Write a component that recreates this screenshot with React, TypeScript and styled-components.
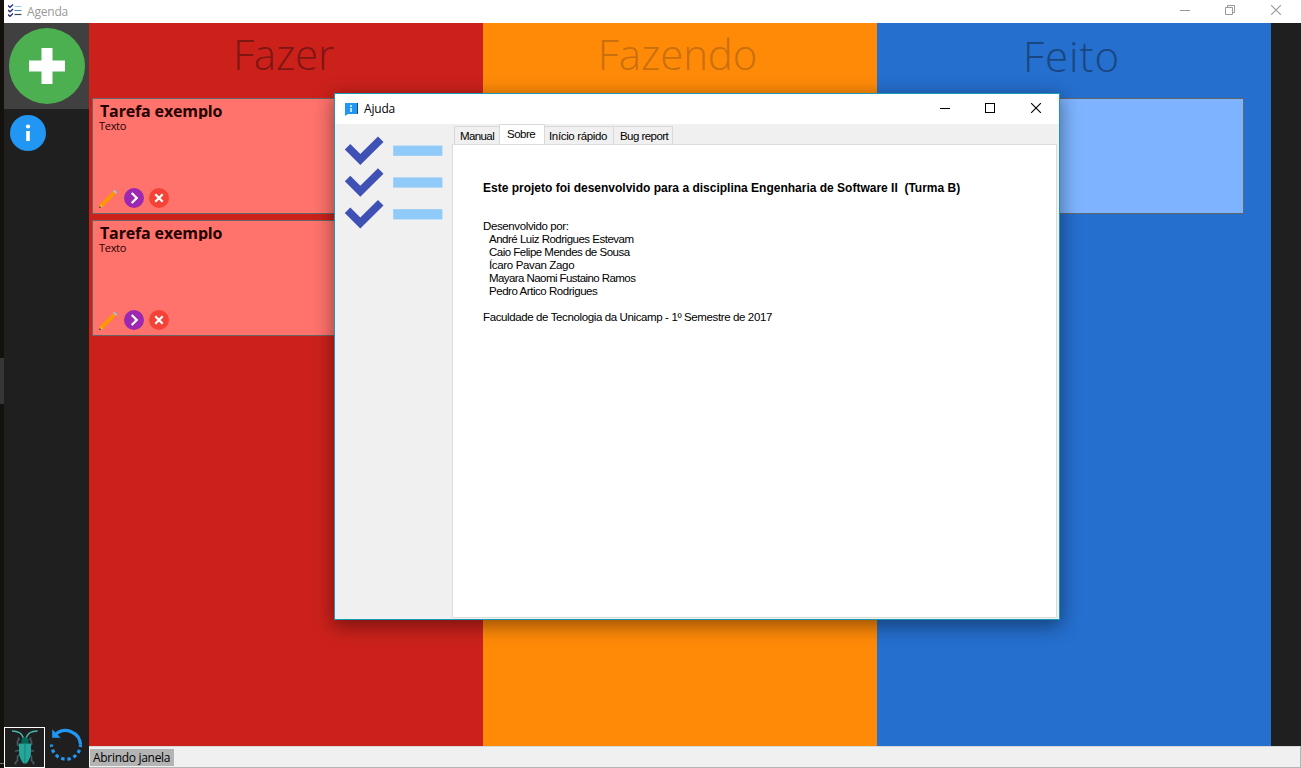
import React from "react";
import styled, { createGlobalStyle } from "styled-components";

const ui = `"Open Sans", "Noto Sans", sans-serif`;
const classic = `"Liberation Sans", Arial, sans-serif`;

const GlobalStyle = createGlobalStyle`
  * { box-sizing: border-box; }
  body { margin: 0; background: #1f1f1f; overflow: hidden; }
  svg { display: block; }
  h2, h3, p { margin: 0; }
`;

const Screen = styled.div`
  position: relative;
  display: flex;
  width: 1301px;
  height: 768px;
  overflow: hidden;
  font-family: ${ui};
`;

const DesktopEdge = styled.div`
  display: flex;
  flex-direction: column;
  width: 4px;
  padding-top: 358px;
  background: #14110c;
`;

const EdgeHandle = styled.div`
  height: 46px;
  background: #363636;
`;

const EdgeLine = styled.div`
  height: 1px;
  margin-top: 359px;
  background: #77736c;
`;

const AppWindow = styled.div`
  display: flex;
  flex: 1;
  flex-direction: column;
`;

const TitleBar = styled.header`
  display: flex;
  align-items: center;
  height: 23px;
  padding: 0 20px 0 4px;
  background: #fff;
`;

const AppTitle = styled.span`
  flex: 1;
  margin-left: 5px;
  color: #999;
  font-size: 12px;
  line-height: 23px;
  letter-spacing: -0.2px;
`;

const WindowControls = styled.div<{ $lift: number }>`
  display: flex;
  align-items: center;
  gap: 36px;
  margin-bottom: ${(p) => p.$lift}px;

  svg:first-child { margin-right: -1px; }
`;

const Main = styled.div`
  display: flex;
  flex: 1;
  background: #1f1f1f;
`;

const Sidebar = styled.aside`
  display: flex;
  flex-direction: column;
  width: 85px;
`;

const AddButton = styled.div`
  height: 86px;
  padding: 5px 0 0 5px;
  background: #404040;
`;

const InfoButton = styled.div`
  padding: 6px 0 0 6px;
`;

const SidebarFooter = styled.div`
  display: flex;
  margin-top: auto;
`;

const BugButton = styled.div`
  width: 41px;
  height: 41px;
  border: 1px solid #fff;
`;

const Workspace = styled.div`
  display: flex;
  flex: 1;
  flex-direction: column;
`;

const Board = styled.main`
  display: grid;
  flex: 1;
  grid-template-columns: repeat(3, 394px);
`;

const Column = styled.section<{ $bg: string }>`
  display: flex;
  flex-direction: column;
  padding: 0 27px 0 3px;
  background: ${(p) => p.$bg};
`;

const ColumnTitle = styled.h2<{ $color: string; $drop?: number; $spacing: number }>`
  height: 75px;
  margin-right: -19px;
  padding-top: ${(p) => p.$drop ?? 0}px;
  color: ${(p) => p.$color};
  font-size: 42px;
  font-weight: 300;
  line-height: 61px;
  letter-spacing: ${(p) => p.$spacing}px;
  text-align: center;
`;

const Card = styled.article<{ $bg: string }>`
  display: flex;
  flex-direction: column;
  height: 116px;
  margin-bottom: 6px;
  padding: 4px 6px 5px;
  border: 1px solid #666;
  background: ${(p) => p.$bg};
`;

const CardTitle = styled.h3`
  height: 16px;
  padding-left: 1px;
  overflow: hidden;
  color: #240000;
  font-size: 16px;
  font-weight: 700;
  line-height: 16px;
  letter-spacing: -0.15px;
  white-space: nowrap;
`;

const CardText = styled.p`
  color: #240000;
  font-size: 11px;
  line-height: 14px;
  letter-spacing: -0.3px;
`;

const CardActions = styled.div`
  display: flex;
  gap: 5px;
  margin-top: auto;
`;

const StatusBar = styled.footer`
  display: flex;
  height: 22px;
  padding: 2px 0 0 1px;
  border: solid #b4b4b4;
  border-width: 0 1px 1px 0;
  background: #f0f0f0;
  box-shadow: inset 0 1px #d9d9d9;
`;

const StatusLabel = styled.span`
  width: 84px;
  height: 17px;
  margin-top: 1px;
  padding-left: 3px;
  background: #b4b4b4;
  font-size: 12px;
  line-height: 17px;
  letter-spacing: -0.3px;
  white-space: nowrap;
`;

const Dialog = styled.div`
  position: absolute;
  left: 334px;
  top: 93px;
  display: flex;
  flex-direction: column;
  width: 726px;
  height: 527px;
  border: 1px solid #1899b5;
  background: #f0f0f0;
  box-shadow: 0 5px 18px 1px rgba(0, 0, 0, 0.42);
`;

const DialogTitleBar = styled.header`
  display: flex;
  align-items: center;
  height: 30px;
  padding: 0 18px 0 10px;
  background: #fff;
`;

const DialogTitle = styled.span`
  flex: 1;
  margin-left: 6px;
  font-size: 12px;
  line-height: 30px;
  letter-spacing: -0.2px;
`;

const DialogBody = styled.div`
  display: flex;
  flex: 1;
  padding: 0 2px 1px 0;
`;

const Illustration = styled.div`
  width: 117px;
  padding: 12px 0 0 9px;
`;

const TabArea = styled.div`
  display: flex;
  flex: 1;
  flex-direction: column;
`;

const TabStrip = styled.div`
  display: flex;
  align-items: flex-end;
  height: 20px;
  padding-left: 2px;
  font-family: ${classic};
  font-size: 11.5px;
`;

const Tab = styled.div<{ $width: number; $inset: number; $active?: boolean; $spacing: number }>`
  width: ${(p) => p.$width}px;
  height: ${(p) => (p.$active ? 21 : 18)}px;
  margin-bottom: ${(p) => (p.$active ? -1 : 0)}px;
  padding-left: ${(p) => p.$inset}px;
  border: solid #d9d9d9;
  border-width: ${(p) => (p.$active ? "1px 1px 0" : "1px 0 0 1px")};
  background: ${(p) => (p.$active ? "#fff" : "#f0f0f0")};
  line-height: 18px;
  letter-spacing: ${(p) => p.$spacing}px;
  white-space: nowrap;

  &:nth-child(3) { border-left: 0; }
  &:last-child { border-right-width: 1px; }
`;

const TabPanel = styled.div`
  flex: 1;
  padding: 37px 30px;
  border: 1px solid #dcdcdc;
  background: #fff;
  color: #000;
  font-family: ${classic};
  font-size: 11.5px;
  line-height: 13px;
`;

const Line = styled.p<{ $spacing: number; $bold?: boolean; $indent?: number; $before?: number }>`
  height: 13px;
  margin-top: ${(p) => p.$before ?? 0}px;
  padding-left: ${(p) => p.$indent ?? 0}px;
  font-size: ${(p) => (p.$bold ? 12 : 11.5)}px;
  font-weight: ${(p) => (p.$bold ? 700 : 400)};
  letter-spacing: ${(p) => p.$spacing}px;
  white-space: pre;
`;

const AppIcon = () => (
  <svg width="14" height="15" viewBox="0 0 14 15" fill="none">
    <path d="M0 1.500l2 1.700L5 .5M0 6l2 1.700L5 5M0 10.500l2 1.700L5 9.500" stroke="#283078" strokeWidth="1.400" />
    <path d="M6.500 2.500h7" stroke="#90caf9" />
    <path d="M6.500 6.500h7" stroke="#4a8abc" />
    <path d="M6.500 10.500h7" stroke="#3a4a5a" strokeWidth="1.200" />
  </svg>
);

const Minimize = ({ color }: { color: string }) => (
  <svg width="10" height="10" viewBox="0 0 10 10">
    <rect y="5" width="10" height="1" fill={color} />
  </svg>
);

const Restore = () => (
  <svg width="10" height="10" viewBox="0 0 10 10" fill="none" stroke="#999">
    <path d="M.5 2.500h7v7h-7zM2.500 2.500v-2h7v7h-2" />
  </svg>
);

const Maximize = () => (
  <svg width="10" height="10" viewBox="0 0 10 10" fill="none" stroke="#000">
    <rect x=".5" y=".5" width="9" height="9" />
  </svg>
);

const Close = ({ color }: { color: string }) => (
  <svg width="10" height="10" viewBox="0 0 10 10" stroke={color} strokeWidth="1.100">
    <path d="M0 0l10 10M10 0L0 10" />
  </svg>
);

const PlusIcon = () => (
  <svg width="76" height="76" viewBox="0 0 76 76">
    <circle cx="38" cy="38" r="38" fill="#4caf50" />
    <path d="M32.500 20h11v12.500H56v11H43.500V56h-11V43.500H20v-11h12.500z" fill="#fff" />
  </svg>
);

const InfoIcon = () => (
  <svg width="36" height="36" viewBox="0 0 36 36">
    <circle cx="18" cy="18" r="18" fill="#2196f3" />
    <circle cx="18" cy="11.500" r="2.100" fill="#fff" />
    <rect x="16.200" y="16" width="3.600" height="10" fill="#fff" />
  </svg>
);

const BeetleIcon = () => (
  <svg width="39" height="39" viewBox="0 0 39 39" fill="none">
    <path d="M15 18.500l-2.500-2v-3l1.500-2-1-2M24 18.500l2.500-2v-3l-1.500-2 1-2M14 22.500l-4 .5M25 22.500l4 .5M15 26l-2.500 2.500v4l-2 2v2M24 26l2.500 2.500v4l2 2v2" stroke="#455a64" strokeWidth="1.700" />
    <path d="M7 3C13.500 3 17 5 18.500 10M32.500 3C26 3 22.500 5 21 10" stroke="#4db6ac" strokeWidth="1.500" />
    <path d="M18 9.500h4l1.500 2v4h-7v-4z" fill="#00695c" />
    <path d="M14 15.500h12v8c0 6-3 10-4.500 12h-3C17 33.500 14 29.500 14 23.500z" fill="#26a69a" />
    <path d="M20 15.500V35" stroke="#00897b" strokeWidth="1" />
  </svg>
);

const ResetIcon = () => (
  <svg width="40" height="38" viewBox="0 0 40 38" fill="none" stroke="#2196f3" strokeWidth="3.200">
    <path d="M10.500 7.500A15 15 0 0 1 35.500 17.500" />
    <path d="M35.500 17.500A14.500 14.700 0 0 1 6.500 17.500" strokeDasharray="3.400 2.900" strokeDashoffset="-5.400" />
    <path d="M7.200 2.300v8.400h8.400z" fill="#2196f3" stroke="none" />
  </svg>
);

const PencilIcon = () => (
  <svg width="20" height="20" viewBox="0 0 20 20">
    <path d="M14 3.200L16.800 6 4 18.800 1.200 16z" fill="#ff9800" />
    <path d="M14 3.200l1.700-1.700 2.800 2.800L16.800 6z" fill="#b0bec5" />
    <path d="M15.700 1.500l.8-.8 2.800 2.800-.8.8z" fill="#e57373" />
    <path d="M1.200 16L4 18.800l-3.600.9z" fill="#ffc107" />
    <path d="M.5 17.800l1.800 1.600-2.100.5z" fill="#37474f" />
  </svg>
);

const NextIcon = () => (
  <svg width="20" height="20" viewBox="0 0 20 20">
    <circle cx="10" cy="10" r="10" fill="#9c27b0" />
    <path d="M7.700 5l5 5-5 5" fill="none" stroke="#fff" strokeWidth="2.300" />
  </svg>
);

const DeleteIcon = () => (
  <svg width="20" height="20" viewBox="0 0 20 20">
    <circle cx="10" cy="10" r="10" fill="#f44336" />
    <path d="M6.300 6.300l7.400 7.400M13.700 6.300l-7.400 7.400" stroke="#fff" strokeWidth="2.300" />
  </svg>
);

const HelpIcon = () => (
  <svg width="13" height="13" viewBox="0 0 13 13">
    <path d="M12 0h1v11h-1z" fill="#174a78" />
    <path d="M0 0h12v11H3l-3 2z" fill="#2196f3" />
    <path d="M5 2h2v2H5zM5 5h2v4H5z" fill="#bfe2fb" />
  </svg>
);

const ChecklistArt = () => (
  <svg width="100" height="94" viewBox="0 0 100 94">
    {[0, 31.8, 63.6].map((y) => (
      <g key={y} transform={`translate(0 ${y})`}>
        <path d="M.8 13.500L6.300 8l10 10L34 .5 39.500 6 16.300 29z" fill="#3f51b5" />
        <rect x="49.200" y="9.600" width="49.200" height="10.200" fill="#90caf9" />
      </g>
    ))}
  </svg>
);

const Task = () => (
  <Card $bg="#ff736c">
    <CardTitle>Tarefa exemplo</CardTitle>
    <CardText>Texto</CardText>
    <CardActions>
      <PencilIcon />
      <NextIcon />
      <DeleteIcon />
    </CardActions>
  </Card>
);

export default function App() {
  return (
    <Screen>
      <GlobalStyle />
      <DesktopEdge>
        <EdgeHandle />
        <EdgeLine />
      </DesktopEdge>
      <AppWindow>
        <TitleBar>
          <AppIcon />
          <AppTitle>Agenda</AppTitle>
          <WindowControls $lift={3}>
            <Minimize color="#999" />
            <Restore />
            <Close color="#999" />
          </WindowControls>
        </TitleBar>
        <Main>
          <Sidebar>
            <AddButton><PlusIcon /></AddButton>
            <InfoButton><InfoIcon /></InfoButton>
            <SidebarFooter>
              <BugButton><BeetleIcon /></BugButton>
              <ResetIcon />
            </SidebarFooter>
          </Sidebar>
          <Workspace>
            <Board>
              <Column $bg="#cc211b">
                <ColumnTitle $color="#7e1613" $spacing={-0.2}>Fazer</ColumnTitle>
                <Task />
                <Task />
              </Column>
              <Column $bg="#ff8a08">
                <ColumnTitle $color="#c96f0d" $spacing={-0.1}>Fazendo</ColumnTitle>
              </Column>
              <Column $bg="#256fce">
                <ColumnTitle $color="#1a4680" $drop={2} $spacing={0.9}>Feito</ColumnTitle>
                <Card $bg="#7eb4ff" />
              </Column>
            </Board>
            <StatusBar>
              <StatusLabel>Abrindo janela</StatusLabel>
            </StatusBar>
          </Workspace>
        </Main>
      </AppWindow>

      <Dialog>
        <DialogTitleBar>
          <HelpIcon />
          <DialogTitle>Ajuda</DialogTitle>
          <WindowControls $lift={2}>
            <Minimize color="#000" />
            <Maximize />
            <Close color="#000" />
          </WindowControls>
        </DialogTitleBar>
        <DialogBody>
          <Illustration><ChecklistArt /></Illustration>
          <TabArea>
            <TabStrip>
              <Tab $width={45} $inset={5} $spacing={-0.6}>Manual</Tab>
              <Tab $width={46} $inset={7} $spacing={-0.5} $active>Sobre</Tab>
              <Tab $width={68} $inset={4} $spacing={-0.35}>Início rápido</Tab>
              <Tab $width={60} $inset={6} $spacing={-0.55}>Bug report</Tab>
            </TabStrip>
            <TabPanel>
              <Line $bold $spacing={0}>Este projeto foi desenvolvido para a disciplina Engenharia de Software II  (Turma B)</Line>
              <Line $before={25} $spacing={-0.38}>Desenvolvido por:</Line>
              <Line $indent={6} $spacing={-0.5}>André Luiz Rodrigues Estevam</Line>
              <Line $indent={6} $spacing={-0.5}>Caio Felipe Mendes de Sousa</Line>
              <Line $indent={6} $spacing={-0.35}>Ícaro Pavan Zago</Line>
              <Line $indent={6} $spacing={-0.57}>Mayara Naomi Fustaino Ramos</Line>
              <Line $indent={6} $spacing={-0.45}>Pedro Artico Rodrigues</Line>
              <Line $before={13} $spacing={-0.38}>Faculdade de Tecnologia da Unicamp - 1º Semestre de 2017</Line>
            </TabPanel>
          </TabArea>
        </DialogBody>
      </Dialog>
    </Screen>
  );
}
